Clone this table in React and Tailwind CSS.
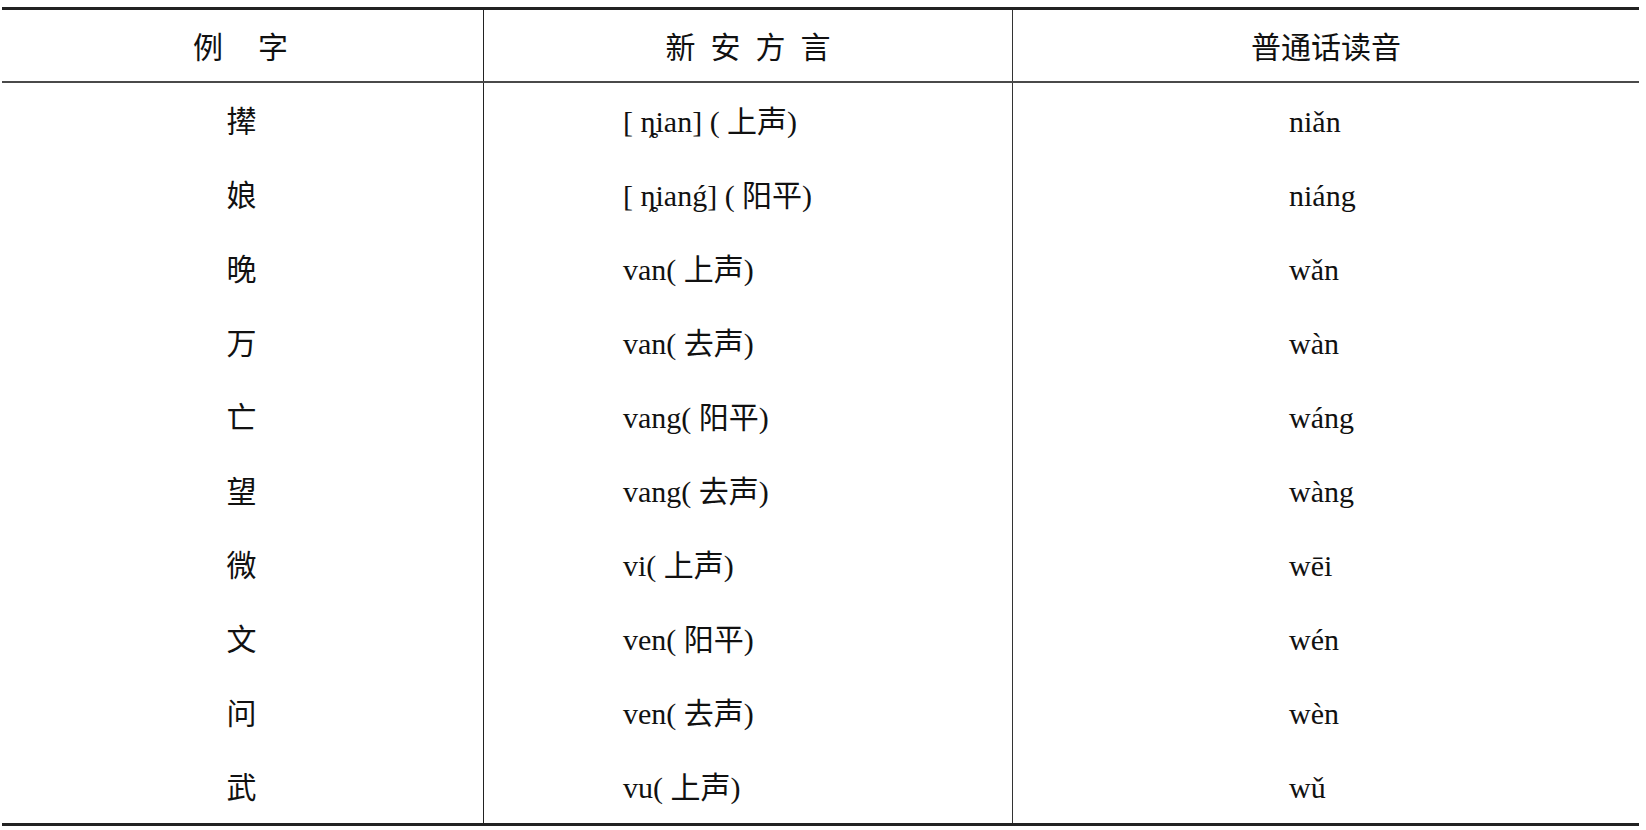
import React from "react";

const rows = [
  ["撵", "[ ȵian] ( 上声)", "niǎn"],
  ["娘", "[ ȵianǵ] ( 阳平)", "niáng"],
  ["晚", "van( 上声)", "wǎn"],
  ["万", "van( 去声)", "wàn"],
  ["亡", "vang( 阳平)", "wáng"],
  ["望", "vang( 去声)", "wàng"],
  ["微", "vi( 上声)", "wēi"],
  ["文", "ven( 阳平)", "wén"],
  ["问", "ven( 去声)", "wèn"],
  ["武", "vu( 上声)", "wǔ"],
];

export default function App() {
  return (
    <div
      className="w-[1646px] h-[830px] bg-white text-[#111] text-[30px] leading-none overflow-hidden"
      style={{ fontFamily: '"Liberation Serif", "Noto Sans CJK SC", serif' }}
    >
      <div className="ml-[2px] mt-[7px] w-[1637px] border-t-[3px] border-b-[3px] border-[#222]">
        <div className="grid grid-cols-[481px_529px_627px] h-[73px] border-b-2 border-[#4a4a4a]">
          <div className="flex items-center justify-center gap-[35px] pt-[5px] pr-[4px]">
            <span>例</span>
            <span>字</span>
          </div>
          <div className="flex items-center justify-center gap-[15px] pt-[5px] border-l border-[#222]">
            <span>新</span>
            <span>安</span>
            <span>方</span>
            <span>言</span>
          </div>
          <div className="flex items-center justify-center pt-[5px] border-l border-[#333]">
            普通话读音
          </div>
        </div>
        {rows.map((r, i) => (
          <div key={i} className="grid grid-cols-[481px_529px_627px] h-[74px]">
            <div className="flex items-center justify-center pt-[3px] pr-[2px]">{r[0]}</div>
            <div className="flex items-center pl-[139px] pt-[3px] border-l border-[#222] whitespace-pre">
              {r[1]}
            </div>
            <div className="flex items-center pl-[276px] pt-[3px] border-l border-[#333]">{r[2]}</div>
          </div>
        ))}
      </div>
    </div>
  );
}
